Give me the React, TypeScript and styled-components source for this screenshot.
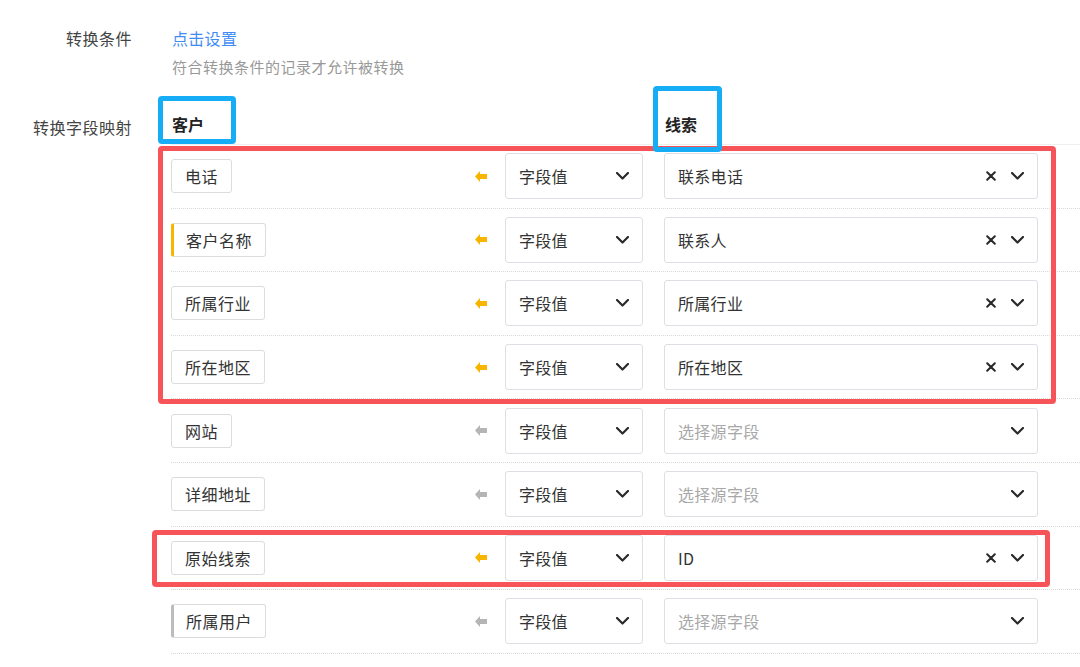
import React from 'react';
import styled, { createGlobalStyle } from 'styled-components';

const Global = createGlobalStyle`
  html, body { margin: 0; padding: 0; background: #fff; }
  body { font-family: "Noto Sans CJK SC", "Noto Sans", sans-serif; color: #333; }
  * { box-sizing: border-box; }
`;

const Page = styled.div`
  position: relative;
  width: 1080px;
  height: 667px;
  overflow: hidden;
  padding-top: 26px;
`;

const FormRow = styled.div<{ $mt?: number }>`
  display: flex;
  margin-top: ${p => p.$mt ?? 0}px;
`;

const Label = styled.div<{ $pt?: number }>`
  flex: 0 0 132px;
  width: 132px;
  margin-right: 39px;
  padding-top: ${p => p.$pt ?? 0}px;
  text-align: right;
  font-size: 16px;
  line-height: 24px;
  letter-spacing: 0.5px;
  color: #444;
`;

const Content = styled.div`
  flex: 1;
  display: flex;
  flex-direction: column;
`;

const Link = styled.a`
  margin-left: 1px;
  font-size: 16px;
  line-height: 24px;
  color: #3f8cf4;
  cursor: pointer;
  letter-spacing: 0.3px;
`;

const Hint = styled.div`
  margin-left: 1px;
  margin-top: 5px;
  font-size: 15px;
  line-height: 24px;
  letter-spacing: 0.5px;
  color: #999;
`;

const Header = styled.div`
  display: flex;
  align-items: center;
  height: 40px;
`;

const HeadCell = styled.div<{ $w: number }>`
  flex: 0 0 ${p => p.$w}px;
  padding-left: 1px;
  font-size: 16px;
  font-weight: 700;
  color: #222;
`;

const Table = styled.div`
  border-top: 1px solid #eeeeee;
`;

const Row = styled.div`
  display: flex;
  align-items: center;
  height: 63.6px;
  border-bottom: 1px dotted #d9d9d9;
`;

const TagCell = styled.div`
  flex: 0 0 304px;
  display: flex;
`;

const Tag = styled.div<{ $mark?: 'yellow' | 'gray' }>`
  height: 34px;
  display: flex;
  align-items: center;
  padding: 0 13px;
  border: 1px solid #dcdcdc;
  border-left: ${p => (p.$mark === 'yellow' ? '3px solid #f7b500' : p.$mark === 'gray' ? '3px solid #bcbcbc' : '1px solid #dcdcdc')};
  padding-left: ${p => (p.$mark ? 12 : 13)}px;
  border-radius: 3px;
  font-size: 16px;
  letter-spacing: 0.5px;
  color: #333;
`;

const ArrowBox = styled.div`
  flex: 0 0 12px;
  margin-right: 18px;
  display: flex;
  align-items: center;
  height: 11px;
`;

const Select = styled.div<{ $w: number; $mr?: number }>`
  flex: 0 0 ${p => p.$w}px;
  margin-right: ${p => p.$mr ?? 0}px;
  height: 46px;
  display: flex;
  align-items: center;
  padding: 0 13px 0 13px;
  border: 1px solid #dcdfe4;
  border-radius: 3px;
  background: #fff;
`;

const Value = styled.span<{ $placeholder?: boolean }>`
  flex: 1;
  font-size: 16px;
  letter-spacing: 0.3px;
  color: ${p => (p.$placeholder ? '#a8a8a8' : '#333')};
`;

const Clear = styled.span`
  display: flex;
  margin-right: 15px;
`;

const Chevron = styled.span`
  display: flex;
`;

const Annot = styled.div<{ $c: string; $x: number; $y: number; $w: number; $h: number }>`
  position: absolute;
  left: ${p => p.$x}px;
  top: ${p => p.$y}px;
  width: ${p => p.$w}px;
  height: ${p => p.$h}px;
  border: 5px solid ${p => p.$c};
  border-radius: 4px;
  pointer-events: none;
`;

const ArrowIcon = ({ active }: { active: boolean }) => (
  <svg width="12" height="11" viewBox="0 0 12 11">
    <polygon points="0,5.5 5,0 5,3 12,3 12,8 5,8 5,11" fill={active ? '#f7b500' : '#b5b5b5'} />
  </svg>
);

const ChevronIcon = () => (
  <svg width="13" height="8" viewBox="0 0 13 8">
    <path d="M1 1 L6.5 6.5 L12 1" stroke="#2a2a2a" strokeWidth="2.2" fill="none" strokeLinecap="round" strokeLinejoin="round" />
  </svg>
);

const ClearIcon = () => (
  <svg width="10" height="10" viewBox="0 0 10 10">
    <path d="M1.2 1.2 L8.8 8.8 M8.8 1.2 L1.2 8.8" stroke="#2a2a2a" strokeWidth="2" strokeLinecap="round" />
  </svg>
);

type RowData = { field: string; mark?: 'yellow' | 'gray'; source?: string };

const rows: RowData[] = [
  { field: '电话', source: '联系电话' },
  { field: '客户名称', mark: 'yellow', source: '联系人' },
  { field: '所属行业', source: '所属行业' },
  { field: '所在地区', source: '所在地区' },
  { field: '网站' },
  { field: '详细地址' },
  { field: '原始线索', source: 'ID' },
  { field: '所属用户', mark: 'gray' },
];

export default function App() {
  return (
    <Page>
      <Global />
      <FormRow>
        <Label>转换条件</Label>
        <Content>
          <div><Link>点击设置</Link></div>
          <Hint>符合转换条件的记录才允许被转换</Hint>
        </Content>
      </FormRow>
      <FormRow $mt={25}>
        <Label $pt={11}>转换字段映射</Label>
        <Content>
          <Header>
            <HeadCell $w={493}>客户</HeadCell>
            <HeadCell $w={100}>线索</HeadCell>
          </Header>
          <Table>
            {rows.map(r => (
              <Row key={r.field}>
                <TagCell>
                  <Tag $mark={r.mark}>{r.field}</Tag>
                </TagCell>
                <ArrowBox>
                  <ArrowIcon active={!!r.source} />
                </ArrowBox>
                <Select $w={138} $mr={21}>
                  <Value>字段值</Value>
                  <Chevron><ChevronIcon /></Chevron>
                </Select>
                <Select $w={374}>
                  <Value $placeholder={!r.source}>{r.source ?? '选择源字段'}</Value>
                  {r.source && <Clear><ClearIcon /></Clear>}
                  <Chevron><ChevronIcon /></Chevron>
                </Select>
              </Row>
            ))}
          </Table>
        </Content>
      </FormRow>
      <Annot $c="#f7545a" $x={158} $y={146} $w={898} $h={258} />
      <Annot $c="#f7545a" $x={152} $y={530} $w={898} $h={57} />
      <Annot $c="#16adf6" $x={158} $y={96} $w={78} $h={48} />
      <Annot $c="#16adf6" $x={653} $y={86} $w={69} $h={66} />
    </Page>
  );
}
